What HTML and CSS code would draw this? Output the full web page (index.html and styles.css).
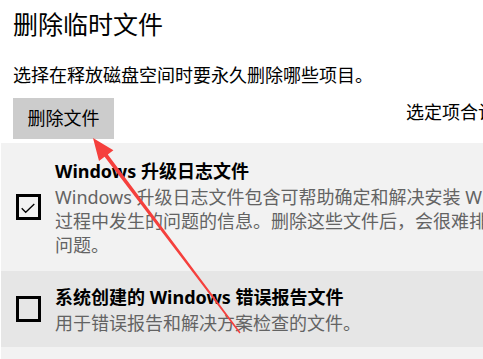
FILE: index.html
```html
<!DOCTYPE html>
<html lang="zh-CN">
<head>
    <meta charset="UTF-8">
    <title>删除临时文件</title>
    <link rel="stylesheet" href="styles.css">
</head>
<body>

    <div class="page">
        <h1 class="title">删除临时文件</h1>
        <p class="intro">选择在释放磁盘空间时要永久删除哪些项目。</p>

        <div class="actions">
            <button class="remove-btn">删除文件</button>
            <span class="total">选定项合计：1.2 GB</span>
        </div>
    </div>

    <div class="file-list">
        <div class="file-item">
            <div class="checkbox">
                <svg width="19" height="20" viewBox="0 0 19 20">
                    <polyline points="2.7,11.3 6.7,15.3 15.3,7" fill="none" stroke="#000" stroke-width="1.3"/>
                </svg>
            </div>
            <div class="file-text">
                <div class="file-name">Windows 升级日志文件</div>
                <div class="file-desc">
                    <span>Windows 升级日志文件包含可帮助确定和解决安装 Windows</span>
                    <span>过程中发生的问题的信息。删除这些文件后，会很难排除安装</span>
                    <span>问题。</span>
                </div>
            </div>
        </div>
        <div class="file-item hover">
            <div class="checkbox"></div>
            <div class="file-text">
                <div class="file-name">系统创建的 Windows 错误报告文件</div>
                <div class="file-desc">
                    <span>用于错误报告和解决方案检查的文件。</span>
                </div>
            </div>
        </div>
    </div>

    <!-- annotation arrow drawn over the screenshot -->
    <svg class="arrow" width="483" height="359" viewBox="0 0 483 359">
        <polygon points="93,138 113.4,150.2 107.8,154.4 240.6,332.5 239.4,333.5 104.6,156.8 99,161" fill="#f5403d"/>
    </svg>

</body>
</html>
```

FILE: styles.css
```css
body {
    margin: 0;
    background-color: #fff;
    color: #000;
    font-family: "Noto Sans", "Noto Sans CJK SC", sans-serif;
    overflow: hidden;
    position: relative;
    width: 483px;
    height: 359px;
}
.page {
    padding-left: 13px;
}
.title {
    margin: 7px 0 0 0;
    font-size: 25px;
    font-weight: normal;
    line-height: 34px;
}
.intro {
    margin: 22px 0 0 0;
    font-size: 18px;
    line-height: 24px;
    white-space: nowrap;
}
.actions {
    display: flex;
    align-items: flex-start;
    margin-top: 11px;
}
.remove-btn {
    flex: none;
    width: 101px;
    height: 41px;
    padding: 0;
    border: none;
    background-color: #ccc;
    color: #000;
    font-family: inherit;
    font-size: 18px;
    line-height: 41px;
    white-space: nowrap;
}
.total {
    flex: none;
    margin-left: 292px;
    margin-top: 2px;
    font-size: 18px;
    line-height: 24px;
    white-space: nowrap;
}
.file-list {
    margin-top: 4px;
    margin-left: 1px;
    background-color: #f2f2f2;
    height: 220px;
}
.file-item {
    display: flex;
    align-items: center;
    height: 127px;
    padding-left: 15px;
    box-sizing: border-box;
}
.file-item.hover {
    margin-top: 1px;
    height: 76px;
    background-color: #e6e6e6;
}
.checkbox {
    flex: none;
    width: 19px;
    height: 20px;
    border: 3px solid #000;
    margin-right: 14px;
}
.checkbox svg {
    display: block;
}
.file-text {
    white-space: nowrap;
    padding-top: 2px;
}
.file-name {
    font-size: 18px;
    font-weight: bold;
    line-height: 24px;
    margin-bottom: 2px;
}
.file-desc {
    font-size: 18px;
    line-height: 24px;
    color: #636363;
}
.file-desc span {
    display: block;
}
.arrow {
    position: absolute;
    top: 0;
    left: 0;
    pointer-events: none;
}
```
